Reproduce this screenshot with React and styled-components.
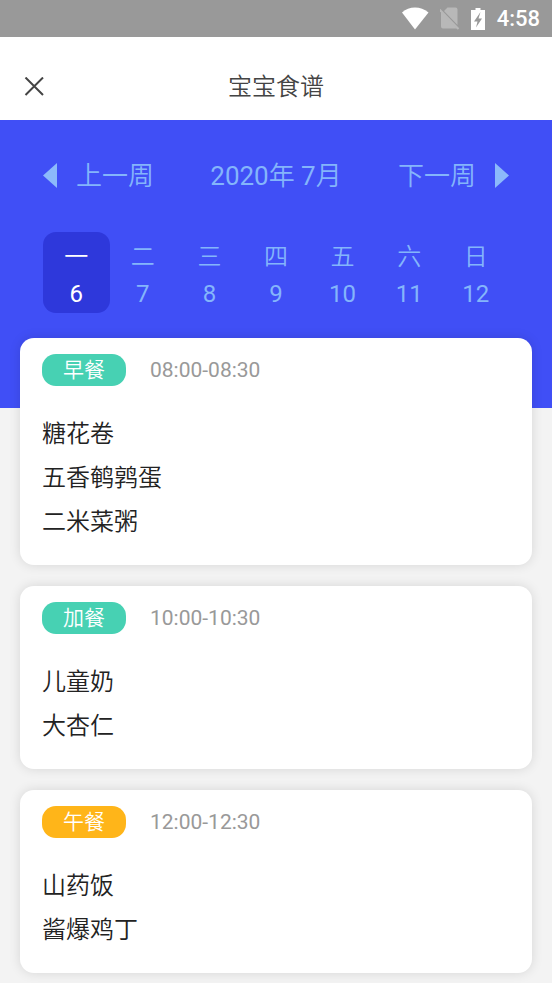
import React from 'react'
import styled, { createGlobalStyle } from 'styled-components'

const GlobalStyle = createGlobalStyle`
  * {
    box-sizing: border-box;
  }

  body {
    margin: 0;
    background: #f3f3f3;
    font-family: Roboto, 'Noto Sans CJK SC', sans-serif;
  }

  button {
    padding: 0;
    border: none;
    background: none;
    font: inherit;
    color: inherit;
    cursor: pointer;
  }
`

const StatusBar = styled.div`
  display: flex;
  align-items: center;
  justify-content: flex-end;
  height: 37px;
  padding-right: 12px;
  background: #999999;
  color: #ffffff;
  font-size: 22px;
  font-weight: 500;
  line-height: 24px;

  svg {
    display: block;
    margin-right: 10px;
  }
`

const TitleBar = styled.header`
  display: grid;
  grid-template-columns: 48px 1fr 48px;
  align-items: center;
  height: 83px;
  padding: 16px 10px 0;
  background: #ffffff;
  color: #444444;

  h1 {
    margin: 0;
    font-size: 24px;
    font-weight: 350;
    line-height: 48px;
    text-align: center;
  }
`

const CloseButton = styled.button`
  display: flex;
  align-items: center;
  justify-content: center;
  width: 48px;
  height: 48px;
`

const Calendar = styled.section`
  padding: 36px 43px 95px;
  background: #404ff6;
  color: #84b5fb;
`

const WeekNav = styled.nav`
  display: flex;
  align-items: center;
  justify-content: space-between;
  height: 40px;
  margin-bottom: 36px;
  font-size: 26px;
  font-weight: 350;
  line-height: 40px;
`

const WeekButton = styled.button`
  display: flex;
  align-items: center;
  gap: 19px;
`

const Digits = styled.span`
  font-weight: 400;
`

const Days = styled.div`
  display: grid;
  grid-template-columns: repeat(7, 1fr);
`

const Day = styled.button`
  && {
    padding: 7px 0 0;
    border-radius: 13px;
    background: ${({ $active }) => ($active ? '#2e38db' : 'none')};
    color: ${({ $active }) => ($active ? '#ffffff' : 'inherit')};
    font-size: 24px;
    font-weight: 350;
    line-height: 37px;
  }

  span {
    display: block;
  }
`

const Meals = styled.main`
  display: flex;
  flex-direction: column;
  gap: 21px;
  margin-top: -70px;
  padding: 0 20px 10px;
`

const Card = styled.article`
  padding: 16px 22px 21px;
  border-radius: 14px;
  background: #ffffff;
  box-shadow: 0 0 12px rgba(0, 0, 0, 0.12);
`

const CardHead = styled.div`
  display: flex;
  align-items: center;
  gap: 24px;
  margin-bottom: 26px;
  line-height: 32px;
`

const Badge = styled.h2`
  width: 84px;
  margin: 0;
  border-radius: 14px;
  background: ${({ $color }) => $color};
  color: #ffffff;
  font-size: 21px;
  font-weight: 350;
  text-align: center;
`

const Time = styled.time`
  color: #999999;
  font-size: 21px;
`

const Dishes = styled.ul`
  margin: 0;
  padding: 0;
  list-style: none;
  color: #222222;
  font-size: 24px;
  font-weight: 350;
  line-height: 44px;
`

const days = [
  ['一', 6],
  ['二', 7],
  ['三', 8],
  ['四', 9],
  ['五', 10],
  ['六', 11],
  ['日', 12],
]

const meals = [
  {
    name: '早餐',
    time: '08:00-08:30',
    color: '#47d1b3',
    dishes: ['糖花卷', '五香鹌鹑蛋', '二米菜粥'],
  },
  {
    name: '加餐',
    time: '10:00-10:30',
    color: '#47d1b3',
    dishes: ['儿童奶', '大杏仁'],
  },
  {
    name: '午餐',
    time: '12:00-12:30',
    color: '#ffb519',
    dishes: ['山药饭', '酱爆鸡丁'],
  },
]

const WifiIcon = () => (
  <svg width="28" height="23" viewBox="0 0 28 23" fill="#ffffff">
    <path d="M13 22.500 0 5.500C3.700 2.200 8 0.500 13 0.500s9.300 1.700 13.500 5z" />
  </svg>
)

const NoSimIcon = () => (
  <svg width="21" height="23" viewBox="0 0 21 23">
    <path
      d="M7.500 0.500H15.500a2 2 0 0 1 2 2V18L4 4zM1 4.500 17 21.500H3a2 2 0 0 1-2-2z"
      fill="#b8b8b8"
    />
    <path d="M-1 2 18.500 22" stroke="#b8b8b8" strokeWidth="2" />
  </svg>
)

const BatteryIcon = () => (
  <svg width="16" height="24" viewBox="0 0 16 24">
    <path d="M4.500 1h5v2H14v20H0V3h4.500z" fill="#ffffff" />
    <path d="M9.500 5 3 14.500h3.500L5 20.500 11 11.500H7.500z" fill="#999999" />
  </svg>
)

const CloseIcon = () => (
  <svg width="20" height="20" viewBox="0 0 20 20">
    <path
      d="M1.500 0.500 19 18M19 0.500 1.500 18"
      stroke="#444444"
      strokeWidth="2"
    />
  </svg>
)

const PrevIcon = () => (
  <svg width="14" height="26" viewBox="0 0 14 26" fill="#8cbafb">
    <path d="M14 0v25L0 12.500z" />
  </svg>
)

const NextIcon = () => (
  <svg width="14" height="26" viewBox="0 0 14 26" fill="#8cbafb">
    <path d="M0 0v25L14 12.500z" />
  </svg>
)

const App = () => (
  <>
    <GlobalStyle />
    <StatusBar>
      <WifiIcon />
      <NoSimIcon />
      <BatteryIcon />
      <span>4:58</span>
    </StatusBar>
    <TitleBar>
      <CloseButton aria-label="关闭">
        <CloseIcon />
      </CloseButton>
      <h1>宝宝食谱</h1>
    </TitleBar>
    <Calendar>
      <WeekNav>
        <WeekButton>
          <PrevIcon />
          上一周
        </WeekButton>
        <span>
          <Digits>2020</Digits>年 <Digits>7</Digits>月
        </span>
        <WeekButton>
          下一周
          <NextIcon />
        </WeekButton>
      </WeekNav>
      <Days>
        {days.map(([label, date], i) => (
          <Day key={date} $active={i === 0}>
            <span>{label}</span>
            <Digits>{date}</Digits>
          </Day>
        ))}
      </Days>
    </Calendar>
    <Meals>
      {meals.map(({ name, time, color, dishes }) => (
        <Card key={name}>
          <CardHead>
            <Badge $color={color}>{name}</Badge>
            <Time>{time}</Time>
          </CardHead>
          <Dishes>
            {dishes.map(dish => (
              <li key={dish}>{dish}</li>
            ))}
          </Dishes>
        </Card>
      ))}
    </Meals>
  </>
)

export default App
